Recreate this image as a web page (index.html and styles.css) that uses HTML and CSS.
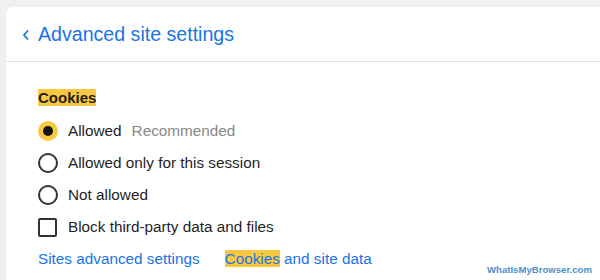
FILE: index.html
```html
<!DOCTYPE html>
<html lang="en">
<head>
    <meta charset="UTF-8">
    <title>Advanced site settings</title>
    <link rel="stylesheet" href="styles.css">
</head>
<body>

<div class="card">
    <div class="header">
        <svg class="back" width="8" height="12" viewBox="0 0 8 12">
            <path d="M6 1.5 L2 6 L6 10.5" fill="none" stroke="#1a73e8" stroke-width="1.7"/>
        </svg>
        <span class="title">Advanced site settings</span>
    </div>
    <div class="content">
        <div class="section-title"><span class="mark">Cookies</span></div>
        <div class="option">
            <span class="radio checked"></span>
            <span>Allowed</span>
            <span class="hint">Recommended</span>
        </div>
        <div class="option">
            <span class="radio"></span>
            <span>Allowed only for this session</span>
        </div>
        <div class="option">
            <span class="radio"></span>
            <span>Not allowed</span>
        </div>
        <div class="option">
            <span class="checkbox"></span>
            <span>Block third-party data and files</span>
        </div>
        <div class="links">
            <a href="#">Sites advanced settings</a>
            <a href="#"><span class="mark">Cookies</span> and site data</a>
        </div>
    </div>
</div>

<div class="watermark">WhatIsMyBrowser.com</div>

</body>
</html>
```

FILE: styles.css
```css
body {
    margin: 0;
    background-color: #f1f0ee;
    font-family: "Liberation Sans", Arial, sans-serif;
    color: #1f1f1f;
    height: 280px;
    overflow: hidden;
}

.card {
    margin: 7px 0 0 6px;
    background-color: #fff;
    border-top-left-radius: 8px;
    height: 273px;
}

.header {
    display: flex;
    align-items: center;
    height: 54px;
    padding-left: 16px;
    border-bottom: 1px solid #e2e2e2;
}

.back {
    margin-right: 8px;
    margin-top: 1px;
}

.title {
    font-size: 19.6px;
    color: #1a73e8;
}

.content {
    padding: 26px 0 0 32px;
}

.section-title {
    font-size: 15px;
    font-weight: bold;
    height: 24px;
    line-height: 20px;
    margin-bottom: 3px;
}

.mark {
    background-color: #f8c940;
}

.option {
    display: flex;
    align-items: center;
    height: 32px;
    font-size: 15.3px;
}

.radio {
    width: 16px;
    height: 16px;
    border: 2px solid #333;
    border-radius: 50%;
    margin-right: 10px;
    display: flex;
    align-items: center;
    justify-content: center;
}

.radio.checked {
    border-color: #f8c940;
    background-color: #f8c940;
}

.radio.checked::after {
    content: "";
    width: 10px;
    height: 10px;
    border-radius: 50%;
    background-color: #111;
}

.checkbox {
    width: 15px;
    height: 15px;
    border: 2px solid #333;
    border-radius: 2px;
    margin-right: 11px;
}

.hint {
    color: #888;
    margin-left: 10px;
}

.links {
    display: flex;
    align-items: center;
    height: 32px;
    font-size: 15.3px;
    gap: 25px;
}

.links a {
    color: #1a73e8;
    text-decoration: none;
}

.watermark {
    position: absolute;
    right: 8px;
    bottom: 5px;
    font-size: 9.6px;
    font-weight: bold;
    color: #4d90c9;
}
```
